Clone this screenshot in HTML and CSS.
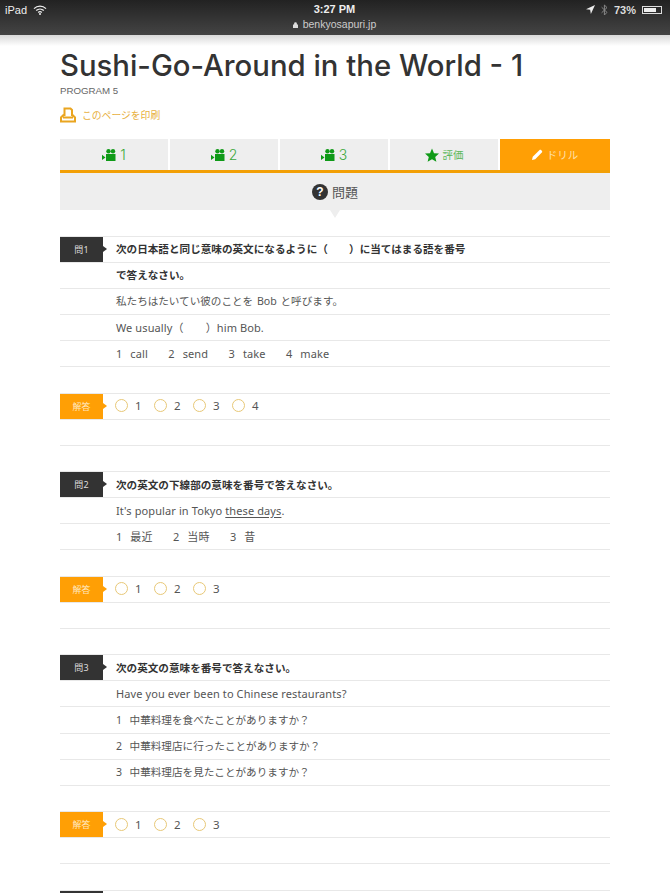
FILE: index.html
```html
<!DOCTYPE html>
<html lang="ja">
<head>
    <meta charset="UTF-8">
    <meta name="viewport" content="width=device-width, initial-scale=1.0">
    <title>Sushi-Go-Around in the World - 1</title>
    <link rel="stylesheet" href="styles.css">
</head>
<body>
    <div class="statusbar">
        <div class="status-left">
            <span>iPad</span>
            <svg class="wifi" viewBox="0 0 14 10" width="14" height="10"><path d="M1 3.6C4.4.4 9.6.4 13 3.6" /><path d="M3.2 5.6c2.2-2 5.4-2 7.6 0" /><path d="M5.2 7.5c1-.9 2.6-.9 3.6 0" /><circle cx="7" cy="9" r="1" /></svg>
        </div>
        <div class="status-center">
            <div class="clock">3:27 PM</div>
            <div class="url"><svg viewBox="0 0 6 7" width="5" height="6"><path d="M1.300 3V2a1.700 1.700 0 0 1 3.400 0v1H6v4H0V3z" /></svg> benkyosapuri.jp</div>
        </div>
        <div class="status-right">
            <svg viewBox="0 0 10 10" width="9" height="9"><path d="M10 0 0 4.600l4.600.8.8 4.600z" fill="#eee" /></svg>
            <svg class="bt" viewBox="0 0 7 12" width="7" height="12"><path d="M.6 3.200 6 8.400 3.400 11V1L6 3.600.6 8.800" /></svg>
            <span>73%</span>
            <span class="battery"><span class="battery-level"></span></span>
        </div>
    </div>
    <div class="bar-shadow"></div>

    <div class="container">
        <h1>Sushi-Go-Around in the World - 1</h1>
        <p class="program">PROGRAM 5</p>
        <a class="print">
            <svg viewBox="0 0 16 16" width="16" height="16"><path d="M4.500 9V1.500h6l1.500 1.500V9" /><path d="M4 7.500 1 10.500v4h14v-4L12 7.500M3 10.500h10" /></svg>
            このページを印刷
        </a>

        <div class="tabs">
            <div class="tab"><svg class="cam" viewBox="0 0 14 12" width="14" height="12"><circle cx="6.500" cy="2.200" r="2.200" /><circle cx="11" cy="2.200" r="2.200" /><rect x="4" y="5" width="9.500" height="7" /><path d="M0 5.800 3.500 8.500 0 11z" /></svg> 1</div>
            <div class="tab"><svg class="cam" viewBox="0 0 14 12" width="14" height="12"><circle cx="6.500" cy="2.200" r="2.200" /><circle cx="11" cy="2.200" r="2.200" /><rect x="4" y="5" width="9.500" height="7" /><path d="M0 5.800 3.500 8.500 0 11z" /></svg> 2</div>
            <div class="tab"><svg class="cam" viewBox="0 0 14 12" width="14" height="12"><circle cx="6.500" cy="2.200" r="2.200" /><circle cx="11" cy="2.200" r="2.200" /><rect x="4" y="5" width="9.500" height="7" /><path d="M0 5.800 3.500 8.500 0 11z" /></svg> 3</div>
            <div class="tab small"><svg class="cam" viewBox="0 0 14 14" width="14" height="14"><path d="M7 .5 9 5.200l5 .4-3.800 3.300 1.200 4.900L7 11.200l-4.400 2.600 1.200-4.900L0 5.600l5-.4z" /></svg> 評価</div>
            <div class="tab small active"><svg viewBox="0 0 12 12" width="11" height="11"><path d="M0 12l.8-3.500L8 1.300c.7-.7 1.500-.7 2.100 0l.6.6c.6.600.6 1.400 0 2L3.500 11.200z" fill="#fff" /></svg> ドリル</div>
        </div>
        <div class="section-head">
            <span class="help">?</span>問題
        </div>

        <div class="question first">
            <div class="row"><span class="label dark">問1</span><b>次の日本語と同じ意味の英文になるように（　　）に当てはまる語を番号</b></div>
            <div class="row"><b>で答えなさい。</b></div>
            <div class="row jp">私たちはたいてい彼のことを Bob と呼びます。</div>
            <div class="row">We usually（　　）him Bob.</div>
            <div class="row choices"><span>1&nbsp; call</span><span>2&nbsp; send</span><span>3&nbsp; take</span><span>4&nbsp; make</span></div>
        </div>
        <div class="answer">
            <div class="row"><span class="label orange">解答</span><span class="opt"><i></i>1</span><span class="opt"><i></i>2</span><span class="opt"><i></i>3</span><span class="opt"><i></i>4</span></div>
            <div class="row"></div>
        </div>

        <div class="question">
            <div class="row"><span class="label dark">問2</span><b>次の英文の下線部の意味を番号で答えなさい。</b></div>
            <div class="row"><span>It's popular in Tokyo <u>these days</u>.</span></div>
            <div class="row choices"><span>1&nbsp; 最近</span><span>2&nbsp; 当時</span><span>3&nbsp; 昔</span></div>
        </div>
        <div class="answer">
            <div class="row"><span class="label orange">解答</span><span class="opt"><i></i>1</span><span class="opt"><i></i>2</span><span class="opt"><i></i>3</span></div>
            <div class="row"></div>
        </div>

        <div class="question">
            <div class="row"><span class="label dark">問3</span><b>次の英文の意味を番号で答えなさい。</b></div>
            <div class="row">Have you ever been to Chinese restaurants?</div>
            <div class="row jp">1&nbsp; 中華料理を食べたことがありますか？</div>
            <div class="row jp">2&nbsp; 中華料理店に行ったことがありますか？</div>
            <div class="row jp">3&nbsp; 中華料理店を見たことがありますか？</div>
        </div>
        <div class="answer">
            <div class="row"><span class="label orange">解答</span><span class="opt"><i></i>1</span><span class="opt"><i></i>2</span><span class="opt"><i></i>3</span></div>
            <div class="row"></div>
        </div>

        <div class="question">
            <div class="row"><span class="label dark"></span></div>
        </div>
    </div>
</body>
</html>
```

FILE: styles.css
```css
html, body {
    height: 893px;
    overflow: hidden;
}
body {
    margin: 0;
    background-color: white;
    color: #444;
    font-family: "Noto Sans", "Noto Sans CJK JP", sans-serif;
}
.statusbar {
    height: 35px;
    background: linear-gradient(#222, #444);
    color: #eee;
    display: grid;
    grid-template-columns: 1fr auto 1fr;
    padding: 0 6px 0 5px;
    font-family: "Liberation Sans", sans-serif;
    font-size: 11px;
}
.status-left, .status-right {
    display: flex;
    align-items: center;
    gap: 6px;
    height: 19px;
}
.status-right {
    justify-content: flex-end;
    font-weight: bold;
    color: #ddd;
}
.wifi {
    fill: none;
    stroke: #eee;
    stroke-width: 1.3;
}
.wifi circle {
    fill: #eee;
    stroke: none;
}
.bt {
    fill: none;
    stroke: #888;
    stroke-width: 1;
}
.battery {
    width: 20px;
    height: 8px;
    border: 1px solid #ddd;
    padding: 1px;
    box-sizing: border-box;
    display: flex;
    margin-right: 2px;
}
.battery-level {
    width: 73%;
    background-color: #eee;
}
.status-center {
    text-align: center;
}
.clock {
    font-weight: bold;
    line-height: 19px;
}
.url {
    font-size: 10.5px;
    line-height: 11px;
    color: #ccc;
}
.url svg {
    fill: #ddd;
    margin-right: 2px;
}
.bar-shadow {
    height: 11px;
    background: linear-gradient(#d8d8d8, white);
}
.container {
    margin: 0 60px;
}
h1 {
    margin: 0;
    font-family: Inter, sans-serif;
    font-weight: 500;
    font-size: 29.3px;
    line-height: 40px;
    color: #333;
}
.program {
    margin: 0;
    font-family: "Liberation Sans", sans-serif;
    font-size: 9.7px;
    line-height: 12px;
    margin-top: -1px;
    color: #666;
}
.print {
    display: flex;
    align-items: center;
    gap: 6px;
    margin-top: 10px;
    height: 16px;
    font-size: 9.8px;
    color: #e8b040;
}
.print svg {
    fill: none;
    stroke: #eaa520;
    stroke-width: 2;
}
.tabs {
    display: grid;
    grid-template-columns: repeat(4, 108px) 110px;
    gap: 2px;
    margin-top: 16px;
    border-bottom: 3px solid #f29f05;
}
.tab {
    height: 31px;
    background-color: #eee;
    color: #3aa83a;
    font-size: 14px;
    font-family: Inter, sans-serif;
    font-weight: 300;
    display: flex;
    justify-content: center;
    align-items: center;
    gap: 4px;
}
.tab.small {
    font-family: "Noto Sans CJK JP", sans-serif;
    font-weight: 400;
    font-size: 10.5px;
    color: #5cb85c;
    gap: 4px;
}
.tab.active {
    background-color: #ff9f05;
    color: #ffe0a8;
}
.cam {
    fill: #0f9a17;
}
.section-head {
    position: relative;
    height: 37px;
    background-color: #eee;
    font-size: 13px;
    color: #555;
    display: flex;
    justify-content: center;
    align-items: center;
    gap: 4px;
}
.section-head::after {
    content: "";
    position: absolute;
    left: 270px;
    top: 37px;
    border: 5px solid transparent;
    border-top: 8px solid #eee;
}
.help {
    width: 16px;
    height: 16px;
    border-radius: 50%;
    background-color: #333;
    color: white;
    font-family: "Liberation Sans", sans-serif;
    font-weight: bold;
    font-size: 12px;
    line-height: 16px;
    text-align: center;
}
.question, .answer {
    margin-top: 25.16px;
    border-top: 1px solid #e8e8e8;
}
.question.first {
    margin-top: 25.6px;
}
.row {
    box-sizing: border-box;
    height: 26.16px;
    padding-bottom: 1px;
    border-bottom: 1px solid #e8e8e8;
    display: flex;
    align-items: center;
    padding-left: 56px;
    font-size: 11px;
    letter-spacing: .1px;
    color: #555;
    position: relative;
}
.row.jp {
    font-size: 10.6px;
    letter-spacing: 0;
    word-spacing: 1px;
}
.row b {
    color: #333;
    font-size: 10.6px;
    letter-spacing: 0;
}
.row u {
    text-underline-offset: 2px;
}
.label {
    position: absolute;
    left: 0;
    top: 0;
    width: 43px;
    height: 25px;
    color: #ddd;
    font-size: 9px;
    text-align: center;
    line-height: 25px;
}
.label::after {
    content: "";
    position: absolute;
    left: 43px;
    top: 9px;
    border: 3px solid transparent;
    border-left: 4px solid #333;
}
.label.dark {
    background-color: #333;
}
.label.orange {
    background-color: #ff9f05;
    color: #ffe8c0;
}
.label.orange::after {
    border-left-color: #ff9f05;
}
.choices {
    gap: 20.5px;
    word-spacing: 1px;
}
.opt {
    display: flex;
    align-items: center;
    gap: 7px;
    width: 39px;
    flex: none;
    margin-left: -1px;
    margin-right: 1px;
    font-size: 11.5px;
    letter-spacing: .5px;
}
.opt i {
    width: 13px;
    height: 13px;
    box-sizing: border-box;
    border: 1px solid #e8c877;
    border-radius: 50%;
}
```
